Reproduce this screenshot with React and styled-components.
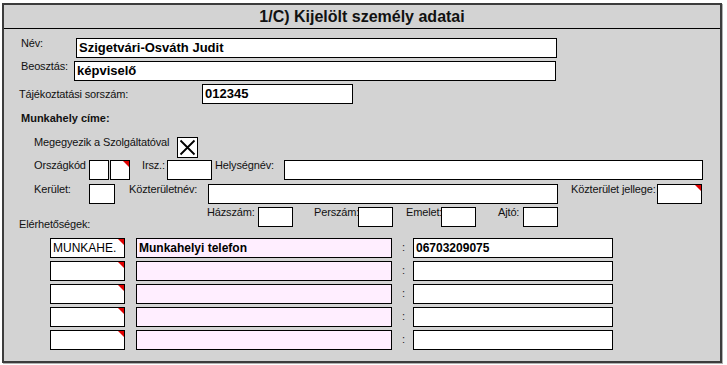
import React from "react";
import styled, { createGlobalStyle } from "styled-components";

const Global = createGlobalStyle`
  html, body { margin: 0; padding: 0; background: #ffffff; }
  body { font-family: "Liberation Sans", Arial, sans-serif; color: #000; }
  * { box-sizing: border-box; }
`;

const Page = styled.div`
  padding: 3px 0 0 2px;
  width: 727px;
  height: 365px;
`;

const Frame = styled.section`
  width: 720px;
  height: 360px;
  background: #d3d3d3;
  border: 2px solid #3c3c3c;
  box-shadow: 1px 1px 0 #b0b0b0;
  display: flex;
  flex-direction: column;
`;

const TitleBar = styled.header`
  height: 24px;
  border-bottom: 1px solid #000;
  display: flex;
  align-items: center;
  justify-content: center;
  font-weight: bold;
  font-size: 16px;
  color: #111;
  padding-top: 1px;
`;

const Row = styled.div`
  display: flex;
  align-items: flex-start;
  margin-top: ${(p) => p.$mt || 0}px;
  padding-left: ${(p) => p.$pl || 0}px;
  height: ${(p) => p.$h || 20}px;
`;

const Label = styled.div`
  flex: none;
  width: ${(p) => (p.$w ? `${p.$w}px` : "auto")};
  padding-left: ${(p) => p.$pl || 0}px;
  padding-top: ${(p) => p.$pt || 0}px;
  font-size: 11px;
  line-height: 11px;
  letter-spacing: -0.15px;
  white-space: nowrap;
  color: #111;
`;

const Heading = styled.div`
  font-size: 11px;
  line-height: 14px;
  font-weight: bold;
  color: #111;
`;

const Field = styled.div`
  position: relative;
  flex: none;
  width: ${(p) => p.$w}px;
  height: 20px;
  margin-left: ${(p) => p.$ml || 0}px;
  background: ${(p) => (p.$pink ? "#ffeeff" : "#ffffff")};
  border: 1px solid #000;
  font-size: ${(p) => p.$fs || 13}px;
  font-weight: ${(p) => (p.$regular ? "normal" : "bold")};
  line-height: 18px;
  padding-left: 2px;
  white-space: nowrap;
  overflow: hidden;
  color: #000;

  ${(p) =>
    p.$flag &&
    `
    &::after {
      content: "";
      position: absolute;
      top: 0;
      right: 0;
      width: 0;
      height: 0;
      border-top: 6px solid #e00000;
      border-left: 6px solid transparent;
    }
  `}
`;

const CheckBox = styled.div`
  flex: none;
  width: 21px;
  height: 21px;
  background: #fff;
  border: 1px solid #000;
  display: flex;
  align-items: center;
  justify-content: center;
`;

const Colon = styled.div`
  flex: none;
  width: 21px;
  padding-left: 10px;
  font-size: 11px;
  line-height: 18px;
  color: #222;
`;

const ContactList = styled.div`
  display: flex;
  flex-direction: column;
  gap: 3px;
  margin-top: 11px;
  padding-left: 46px;
`;

const ContactRow = styled.div`
  display: flex;
  align-items: flex-start;
  height: 20px;
`;

const contacts = [
  { type: "MUNKAHE.", name: "Munkahelyi telefon", value: "06703209075" },
  { type: "", name: "", value: "" },
  { type: "", name: "", value: "" },
  { type: "", name: "", value: "" },
  { type: "", name: "", value: "" },
];

export default function App() {
  return (
    <>
      <Global />
      <Page>
        <Frame>
          <TitleBar>1/C) Kijelölt személy adatai</TitleBar>

          <Row $mt={9} $pl={17}>
            <Label $w={55}>Név:</Label>
            <Field $w={481}>Szigetvári-Osváth Judit</Field>
          </Row>

          <Row $mt={3} $pl={17}>
            <Label $w={53}>Beosztás:</Label>
            <Field $w={482}>képviselő</Field>
          </Row>

          <Row $mt={3} $pl={15}>
            <Label $w={183} $pt={5}>Tájékoztatási sorszám:</Label>
            <Field $w={151}>012345</Field>
          </Row>

          <Row $mt={7} $pl={17} $h={14}>
            <Heading>Munkahely címe:</Heading>
          </Row>

          <Row $mt={12} $pl={30} $h={21}>
            <Label $w={143}>Megegyezik a Szolgáltatóval</Label>
            <CheckBox>
              <svg width="17" height="17" viewBox="0 0 17 17">
                <path d="M1.5 1.5 L15.5 15.5 M15.5 1.5 L1.5 15.5" stroke="#000" strokeWidth="1.8" fill="none" />
              </svg>
            </CheckBox>
          </Row>

          <Row $mt={2} $pl={30}>
            <Label $w={55}>Országkód</Label>
            <Field $w={20} />
            <Field $w={20} $ml={1} $flag />
            <Label $w={37} $pl={12}>Irsz.:</Label>
            <Field $w={45} />
            <Label $w={72} $pl={3}>Helységnév:</Label>
            <Field $w={419} />
          </Row>

          <Row $mt={4} $pl={30}>
            <Label $w={55}>Kerület:</Label>
            <Field $w={26} />
            <Label $w={93} $pl={14}>Közterületnév:</Label>
            <Field $w={350} />
            <Label $w={99} $pl={13}>Közterület jellege:</Label>
            <Field $w={45} $flag />
          </Row>

          <Row $mt={3} $pl={15}>
            <Label $w={188} $pt={12}>Elérhetőségek:</Label>
            <Label $w={51}>Házszám:</Label>
            <Field $w={35} />
            <Label $w={65} $pl={21}>Perszám:</Label>
            <Field $w={35} />
            <Label $w={48} $pl={13}>Emelet:</Label>
            <Field $w={35} />
            <Label $w={47} $pl={22}>Ajtó:</Label>
            <Field $w={35} />
          </Row>

          <ContactList>
            {contacts.map((c, i) => (
              <ContactRow key={i}>
                <Field $w={75} $flag $regular $fs={12}>
                  {c.type}
                </Field>
                <Field $w={256} $ml={11} $pink $fs={12}>
                  {c.name}
                </Field>
                <Colon>:</Colon>
                <Field $w={200} $fs={12}>
                  {c.value}
                </Field>
              </ContactRow>
            ))}
          </ContactList>
        </Frame>
      </Page>
    </>
  );
}
